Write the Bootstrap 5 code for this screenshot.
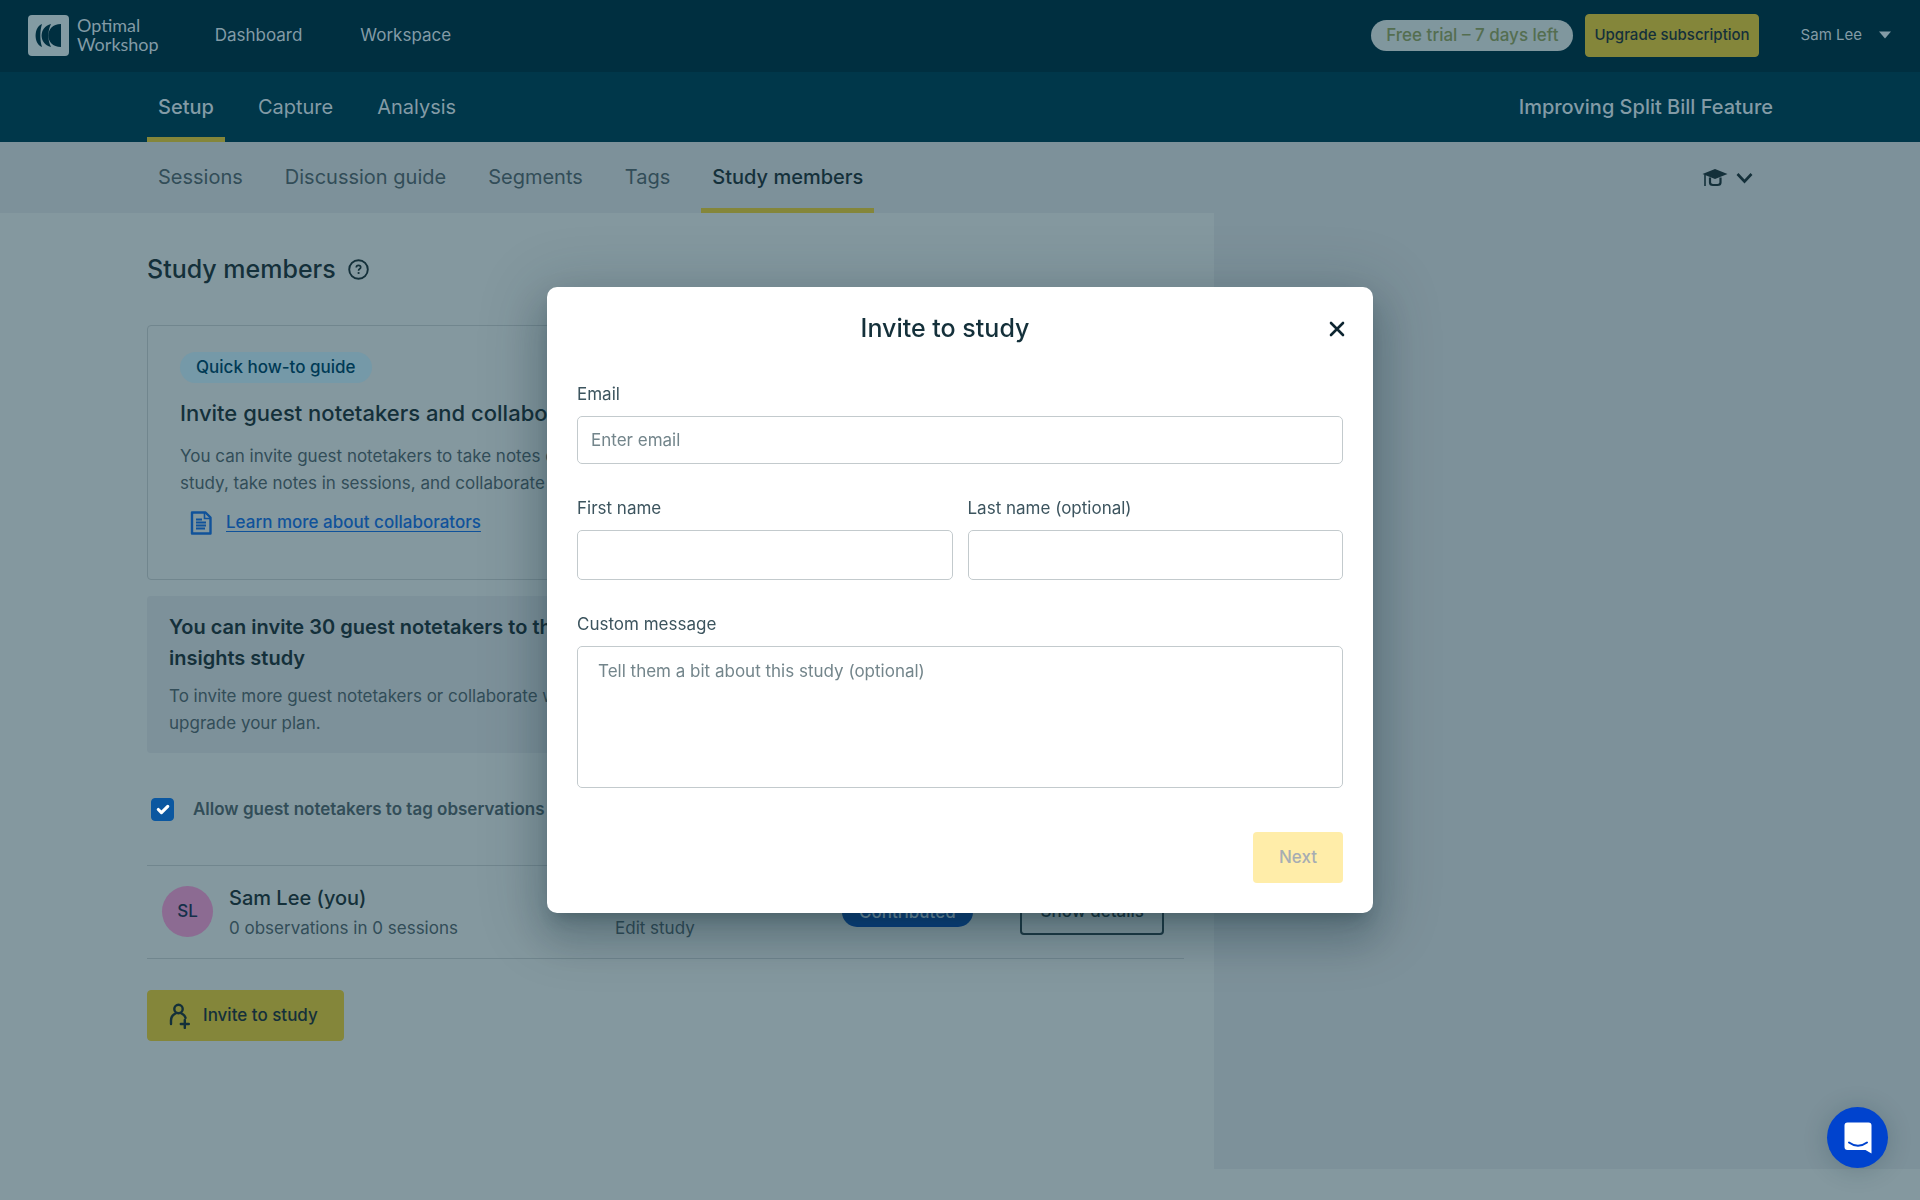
<!DOCTYPE html>
<html lang="en">
<head>
<meta charset="utf-8">
<meta name="viewport" content="width=device-width, initial-scale=1">
<title>Study members – Improving Split Bill Feature</title>
<link href="https://cdn.jsdelivr.net/npm/bootstrap@5.3.0/dist/css/bootstrap.min.css" rel="stylesheet">
<style>
  :root {
    --ink: #14303a;
    --ink-soft: #324d58;
    --page: #84989f;
    --tint: #7d919a;
    --line: #71868e;
    --gold: #84863a;
    --bar-text: #839ba6;
  }
  body { font-family: Inter, "Liberation Sans", sans-serif; font-size: 17px; line-height: 27px; color: var(--ink-soft); background: var(--page); }
  a { color: inherit; text-decoration: none; }
  .gutter-x { padding-left: 147px; padding-right: 147px; }
  .topbar { background: #002f40; color: var(--bar-text); height: 72px; padding: 0 24px 2px; }
  .brand-text { font-family: Lato, sans-serif; font-size: 18px; line-height: 19px; }
  .top-links { gap: 58px; margin-left: 56px; }
  .trial-pill { background: #80979e; color: #546e50; border-radius: 16px; line-height: 31px; padding: 0 15px; font-weight: 500; }
  .btn-gold { --bs-btn-bg: var(--gold); --bs-btn-color: #14303a; --bs-btn-border-color: var(--gold); --bs-btn-hover-bg: #8f9140; border-radius: 4px; font-weight: 500; }
  .btn-upgrade { font-size: 15px; padding: 0 8px; height: 43px; margin: 0 22px 0 12px; }
  .user-menu { font-size: 15px; color: var(--bar-text); }
  .studybar { background: #00374a; color: var(--bar-text); height: 70px; }
  .subbar { background: var(--tint); height: 71px; }
  .tabs { gap: 20px; }
  .studybar .tabs { gap: 22px; }
  .tabs .nav-link { color: inherit; font-size: 20px; padding: 5px 11px 0; display: flex; align-items: center; border-bottom: 5px solid transparent; }
  .tabs .nav-link.active { border-color: var(--gold); font-weight: 500; }
  .subbar .nav-link.active { color: var(--ink); }
  .study-title { font-size: 20px; font-weight: 500; }
  .main-pane { flex: 0 0 1214px; padding: 38px 30px 0 147px; }
  .side-pane { background: var(--tint); min-height: calc(100vh - 244px); }
  h1, h2, h3 { color: var(--ink); margin: 0; }
  h1, .modal-title { font-size: 25px; line-height: 36px; font-weight: 500; }
  .page-head { gap: 12px; margin-bottom: 38px; }
  .guide-card { border: 1px solid var(--line); border-radius: 4px; padding: 26px 32px 43px; }
  .guide-card h2 { font-size: 22px; line-height: 32px; font-weight: 500; margin: 14px 0; }
  .guide-pill { background: #7599a8; color: #003a55; border-radius: 16px; line-height: 31px; padding: 0 16px; font-weight: 500; }
  .guide-copy { margin-bottom: 12px; }
  .doc-row { gap: 14px; padding-left: 10px; }
  .doc-link { color: #10529a; text-decoration: underline; font-weight: 500; text-underline-offset: 3px; }
  .quota-box { background: var(--tint); border-radius: 4px; padding: 16px 22px; }
  .quota-box h3 { font-size: 20px; line-height: 31px; font-weight: 600; margin-bottom: 9px; }
  .allow-row { margin: 43px 0 42px 4px; gap: 19px; }
  .tick { width: 23px; height: 23px; }
  .tick.form-check-input { margin: 0; border-radius: 4px; }
  .tick.form-check-input:checked { background-color: #0b57a0; border-color: #0b57a0; }
  .allow-label { font-weight: 600; }
  .member-row { border-top: 1px solid var(--line); border-bottom: 1px solid var(--line); padding: 15px 20px 16px 15px; }
  .who { flex: 0 0 453px; }
  .avatar { width: 51px; height: 51px; background: #8c6b92; color: #14304a; font-weight: 500; }
  .member-name { font-size: 20px; line-height: 34px; color: var(--ink); font-weight: 500; }
  .member-role { flex: 0 0 227px; padding-top: 34px; }
  .status-pill { background: #063e80; color: #7f9fb4; line-height: 30px; border-radius: 15px; padding: 0 17px; font-weight: 500; }
  .btn-details { --bs-btn-color: #14303a; --bs-btn-border-color: #1c3944; border-width: 2px; border-radius: 4px; height: 46px; padding: 0 18px; font-size: 17px; font-weight: 500; }
  .btn-invite { height: 51px; font-size: 17px; padding: 0 25px 0 21px; gap: 12px; margin-top: 31px; }
  .modal-dialog { max-width: 826px; }
  .modal-content { border: 0; border-radius: 10px; color: #3c545e; box-shadow: 0 11px 15px -7px rgba(20,45,55,.3), 0 24px 38px 3px rgba(20,45,55,.2), 0 9px 60px 12px rgba(20,45,55,.18); }
  .modal-header { border: 0; padding: 23px 24px 0 18px; }
  .modal-body { padding: 35px 30px 0; }
  .modal-footer { border: 0; padding: 44px 30px 30px; }
  .modal-footer > * { margin: 0; }
  .modal-title { color: #14303a; }
  .close-x { width: 24px; height: 24px; padding: 0; color: #0d2530; line-height: 1; }
  .name-fields { gap: 15px; margin: 31px 0; }
  .form-label { margin-bottom: 8px; line-height: 27px; }
  .form-control { border-color: #c3cacd; border-radius: 5px; height: 50px; font-size: 17px; padding: 0 13px; }
  .form-control::placeholder { color: #73858b; }
  #email { height: 48px; }
  #message { height: 142px; padding: 11px 20px; resize: none; line-height: 27px; }
  .btn-next { height: 51px; padding: 0 26px; font-size: 17px; border: 0; border-radius: 4px; font-weight: 500; }
  .btn-next:disabled { background: #ffeda9; color: #a7adb3; opacity: 1; }
  .chat-fab { right: 32px; bottom: 32px; width: 61px; height: 61px; background: #0043ce; border: 0; z-index: 1100; box-shadow: 0 2px 24px rgba(20,50,60,.22); }
</style>
<script src="https://cdn.jsdelivr.net/npm/bootstrap@5.3.0/dist/js/bootstrap.bundle.min.js"></script>
</head>
<body>
<header>
  <div class="topbar d-flex align-items-center">
    <a href="#" class="d-flex align-items-center ms-1">
      <svg width="41" height="41" viewBox="0 0 41 41" aria-hidden="true"><rect width="41" height="41" rx="4" fill="#839ba3"/><g fill="#002f40"><path d="M14 9C5.500 12 5.500 29 14 32C11.800 25 11.800 16 14 9Z"/><path d="M23 9C10.500 12 10.500 29 23 32C19.500 25 19.500 16 23 9Z"/><path d="M33 9C16 9 16 32 33 32Z"/></g></svg>
      <span class="brand-text ms-2">Optimal<br>Workshop</span>
    </a>
    <nav class="top-links d-flex">
      <a href="#">Dashboard</a>
      <a href="#">Workspace</a>
    </nav>
    <span class="trial-pill ms-auto">Free trial – 7 days left</span>
    <button type="button" class="btn btn-gold btn-upgrade">Upgrade subscription</button>
    <button type="button" class="btn user-menu d-flex align-items-center gap-3 border-0 ms-2 pe-1">Sam Lee <svg width="14" height="8" viewBox="0 0 14 8" aria-hidden="true"><path d="M1 0.500h12L7 7.500Z" fill="currentColor"/></svg></button>
  </div>
  <div class="studybar gutter-x d-flex">
    <nav class="nav tabs flex-nowrap">
      <a class="nav-link active" href="#">Setup</a>
      <a class="nav-link" href="#">Capture</a>
      <a class="nav-link" href="#">Analysis</a>
    </nav>
    <span class="study-title ms-auto align-self-center">Improving Split Bill Feature</span>
  </div>
  <div class="subbar gutter-x d-flex">
    <nav class="nav tabs flex-nowrap">
      <a class="nav-link" href="#">Sessions</a>
      <a class="nav-link" href="#">Discussion guide</a>
      <a class="nav-link" href="#">Segments</a>
      <a class="nav-link" href="#">Tags</a>
      <a class="nav-link active" href="#">Study members</a>
    </nav>
    <button type="button" class="btn border-0 ms-auto me-2 d-flex align-items-center gap-2" aria-label="Learning resources">
      <svg width="26" height="20" viewBox="0 0 26 20" aria-hidden="true"><path d="M13 1L25.500 6L13 11L0.500 6Z" fill="#14303a"/><path d="M3 6.500v11.500" stroke="#14303a" stroke-width="1.600"/><path d="M8 9.500v5q0 2.500 3 2.500h4.500q3 0 3-2.500V9.500" fill="none" stroke="#14303a" stroke-width="2.200"/></svg>
      <svg width="17" height="12" viewBox="0 0 17 12" aria-hidden="true"><path d="M1.500 2l7 7.500l7-7.500" fill="none" stroke="#14303a" stroke-width="2.600"/></svg>
    </button>
  </div>
</header>

<div class="d-flex align-items-start">
  <main class="main-pane">
    <div class="page-head d-flex align-items-center">
      <h1>Study members</h1>
      <svg width="21" height="21" viewBox="0 0 21 21" role="img" aria-label="Help"><circle cx="10.500" cy="10.500" r="9.300" fill="none" stroke="#14303a" stroke-width="1.900"/><path d="M8.300 8.600q0-2.200 2.200-2.200t2.200 1.900q0 1.200-1.200 1.800-.9.500-.9 1.600" fill="none" stroke="#14303a" stroke-width="1.700"/><circle cx="10.600" cy="14" r="1.100" fill="#14303a"/></svg>
    </div>

    <section class="guide-card mb-3">
      <span class="guide-pill d-inline-block">Quick how-to guide</span>
      <h2>Invite guest notetakers and collaborators</h2>
      <p class="guide-copy">You can invite guest notetakers to take notes on<br>study, take notes in sessions, and collaborate in</p>
      <div class="doc-row d-flex align-items-center">
        <svg width="22" height="24" viewBox="0 0 22 24" aria-hidden="true"><path d="M2 1.500h13.500L20.500 6.500V22.500H2Z" fill="none" stroke="#10529a" stroke-width="2.400" stroke-linejoin="round"/><path d="M14.500 2v5.500H20" fill="none" stroke="#10529a" stroke-width="1.600"/><path d="M6 8.500h6M6 11.500h10M6 14.500h10M6 17.500h9" stroke="#10529a" stroke-width="1.800"/></svg>
        <a class="doc-link" href="#">Learn more about collaborators</a>
      </div>
    </section>

    <section class="quota-box">
      <h3>You can invite 30 guest notetakers to this<br>insights study</h3>
      <p class="mb-0">To invite more guest notetakers or collaborate w<br>upgrade your plan.</p>
    </section>

    <div class="allow-row d-flex align-items-center">
      <input class="form-check-input tick" type="checkbox" id="allowTag" checked>
      <label class="allow-label" for="allowTag">Allow guest notetakers to tag observations</label>
    </div>

    <div class="member-row d-flex align-items-center">
      <div class="who d-flex align-items-center gap-3">
        <span class="avatar rounded-circle d-flex align-items-center justify-content-center">SL</span>
        <div>
          <div class="member-name">Sam Lee (you)</div>
          <div>0 observations in 0 sessions</div>
        </div>
      </div>
      <div class="member-role">Edit study</div>
      <span class="status-pill">Contributed</span>
      <button type="button" class="btn btn-details ms-auto">Show details</button>
    </div>

    <button type="button" class="btn btn-gold btn-invite d-flex align-items-center">
      <svg width="22" height="26" viewBox="0 0 22 26" aria-hidden="true"><g fill="none" stroke="#14303a" stroke-width="2.400" stroke-linecap="round"><circle cx="9.500" cy="6" r="4.200"/><path d="M2 21v-3.500q0-5 4.500-7M12.500 10.500q3.500 1.500 4 4.500M15.800 17v8M11.800 21h8"/></g></svg>
      Invite to study
    </button>
  </main>
  <aside class="side-pane flex-fill"></aside>
</div>

<div class="modal show d-block" tabindex="-1" role="dialog" aria-modal="true" aria-labelledby="inviteTitle">
  <div class="modal-dialog modal-dialog-centered">
    <form class="modal-content">
      <div class="modal-header">
        <h2 class="modal-title flex-fill text-center" id="inviteTitle">Invite to study</h2>
        <button type="button" class="btn close-x border-0" aria-label="Close"><svg width="16" height="16" viewBox="0 0 16 16" aria-hidden="true"><path d="M2 2l12 12M14 2L2 14" stroke="currentColor" stroke-width="2.600" stroke-linecap="round"/></svg></button>
      </div>
      <div class="modal-body">
        <label class="form-label" for="email">Email</label>
        <input type="email" class="form-control" id="email" placeholder="Enter email">
        <div class="name-fields d-flex">
          <div class="flex-fill">
            <label class="form-label" for="first">First name</label>
            <input type="text" class="form-control" id="first">
          </div>
          <div class="flex-fill">
            <label class="form-label" for="last">Last name (optional)</label>
            <input type="text" class="form-control" id="last">
          </div>
        </div>
        <label class="form-label" for="message">Custom message</label>
        <textarea class="form-control" id="message" placeholder="Tell them a bit about this study (optional)"></textarea>
      </div>
      <div class="modal-footer">
        <button type="submit" class="btn btn-next" disabled>Next</button>
      </div>
    </form>
  </div>
</div>

<button type="button" class="chat-fab position-fixed rounded-circle d-flex align-items-center justify-content-center p-0" aria-label="Open chat">
  <svg width="28" height="32" viewBox="0 0 28 32" aria-hidden="true"><path d="M3.500 0.500h21q3 0 3 3V31.500l-6-3.500H3.500q-3 0-3-3V3.500q0-3 3-3Z" fill="#fff"/><path d="M5 20.500q9 6.500 18 0" fill="none" stroke="#0043ce" stroke-width="2" stroke-linecap="round"/></svg>
</button>
</body>
</html>
